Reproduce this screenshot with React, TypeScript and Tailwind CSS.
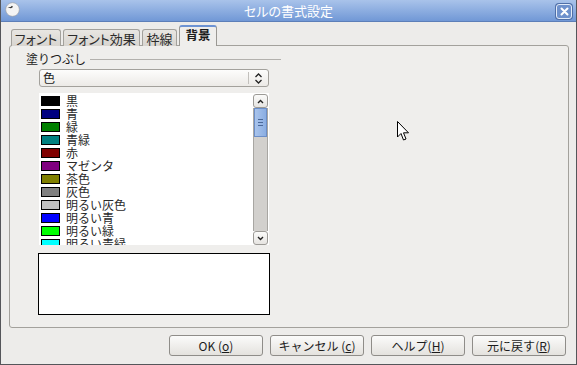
import React from 'react';

const FONT = "font-['DejaVu_Sans','Noto_Sans_CJK_JP',sans-serif]";
const JP = "font-['Noto_Sans_CJK_JP','DejaVu_Sans',sans-serif]";

const COLORS: { name: string; hex: string }[] = [
  { name: '黒', hex: '#000000' },
  { name: '青', hex: '#000080' },
  { name: '緑', hex: '#008000' },
  { name: '青緑', hex: '#008080' },
  { name: '赤', hex: '#800000' },
  { name: 'マゼンタ', hex: '#800080' },
  { name: '茶色', hex: '#808000' },
  { name: '灰色', hex: '#808080' },
  { name: '明るい灰色', hex: '#c0c0c0' },
  { name: '明るい青', hex: '#0000ff' },
  { name: '明るい緑', hex: '#00ff00' },
  { name: '明るい青緑', hex: '#00ffff' },
];

const TABS: { label: string; w: string }[] = [
  { label: 'フォント', w: 'w-[50px]' },
  { label: 'フォント効果', w: 'w-[77px]' },
  { label: '枠線', w: 'w-[35px]' },
  { label: '背景', w: 'w-[38px]' },
];

function TitleBar() {
  return (
    <div className="relative flex h-[22px] items-center justify-center border-b border-[#5d7fb8] bg-gradient-to-b from-[#a9c3ea] to-[#7198d6]">
      <svg className="absolute left-[4px] top-[2px]" width="15" height="15" viewBox="0 0 15 15">
        <circle cx="7.5" cy="7.5" r="6.8" fill="#f4f4f4" stroke="#a0a0a0" strokeWidth="0.6" />
        <path d="M2.5 5.5 L5.5 5 L7 3.8 L8 5 L6 6.2 Z" fill="#333" />
      </svg>
      <span className={`${JP} text-[13px] leading-none text-white [font-feature-settings:'palt']`}>セルの書式設定</span>
      <div className="absolute right-[4px] top-[4px] flex h-[15px] w-[16px] items-center justify-center rounded-[3px] border border-[#e2ebf8] bg-[#6e91cc] shadow-[0_0_0_1px_#4f6fa8]">
        <svg width="9" height="9" viewBox="0 0 9 9">
          <path d="M1.5 1.5 L7.5 7.5 M7.5 1.5 L1.5 7.5" stroke="#fff" strokeWidth="2" strokeLinecap="round" />
        </svg>
      </div>
    </div>
  );
}

function Tabs() {
  return (
    <div className="relative z-10 flex h-[20px] items-end pl-[10px]">
      {TABS.map((t, i) =>
        i === 3 ? (
          <div
            key={t.label}
            className={`${JP} ${t.w} flex h-[21px] items-center justify-center rounded-t-[3px] border-x border-t-2 border-x-[#9a9893] border-t-[#6d93d3] bg-[#efeeec] pb-[2px] text-[12.5px] font-bold leading-none text-[#1c1c1c]`}
          >
            {t.label}
          </div>
        ) : (
          <div
            key={t.label}
            className={`${JP} ${t.w} mr-[2px] flex h-[17px] items-center justify-center rounded-t-[3px] border border-b-0 border-[#a3a19c] bg-gradient-to-b from-[#e8e6e2] to-[#d8d5d0] text-[13px] leading-none text-[#2b2b2b] [font-feature-settings:'palt']`}
          >
            {t.label}
          </div>
        )
      )}
    </div>
  );
}

function Scrollbar() {
  return (
    <div className="flex w-[15px] flex-col">
      <div className="flex h-[14px] items-center justify-center rounded-[3px] border border-[#9c9a96] bg-gradient-to-b from-[#fbfbfa] to-[#e6e4e1]">
        <svg width="7" height="5" viewBox="0 0 7 5">
          <path d="M1 4 L3.5 1.5 L6 4" stroke="#222" strokeWidth="1.4" fill="none" />
        </svg>
      </div>
      <div className="flex flex-1 flex-col border-x border-[#a8a6a2] bg-[#d2d0cd]">
        <div className="flex h-[29px] flex-col items-center justify-center gap-[2px] border border-[#6b8ec8] bg-gradient-to-r from-[#a9c4ec] to-[#8aade2]">
          <div className="h-px w-[5px] bg-[#4a6899]" />
          <div className="h-px w-[5px] bg-[#4a6899]" />
          <div className="h-px w-[5px] bg-[#4a6899]" />
        </div>
      </div>
      <div className="flex h-[14px] items-center justify-center rounded-[3px] border border-[#9c9a96] bg-gradient-to-b from-[#fbfbfa] to-[#e6e4e1]">
        <svg width="7" height="5" viewBox="0 0 7 5">
          <path d="M1 1 L3.5 3.5 L6 1" stroke="#222" strokeWidth="1.4" fill="none" />
        </svg>
      </div>
    </div>
  );
}

function Panel() {
  return (
    <div className="-mt-px ml-[8px] h-[283px] w-[560px] rounded-[3px] border border-[#a3a19c] bg-[#efeeec] pl-[16px] pt-[6px]">
      <div className="flex items-center">
        <span className={`${JP} text-[12px] leading-[14px] text-[#1c1c1c]`}>塗りつぶし</span>
        <div className="ml-[4px] mt-[1px] h-px w-[191px] bg-[#b3b1ad]" />
      </div>
      <div className="ml-[13px] mt-[3px] w-[230px]">
        <div className="flex h-[18px] items-center rounded-[3px] border border-[#a3a19c] bg-gradient-to-b from-[#fdfdfc] to-[#eceae7]">
          <span className={`${JP} flex-1 pl-[3px] text-[12px] leading-none text-[#1c1c1c]`}>色</span>
          <div className="h-[12px] w-px bg-[#c2c0bc]" />
          <svg className="mx-[5px]" width="9" height="13" viewBox="0 0 9 13">
            <path d="M1.5 5 L4.5 2 L7.5 5 M1.5 8 L4.5 11 L7.5 8" stroke="#222" strokeWidth="1.3" fill="none" />
          </svg>
        </div>
        <div className="mt-[6px] flex h-[152px] bg-white pl-[2px] pr-[1px] pt-px">
          <div className="flex-1 overflow-hidden">
            {COLORS.map((c) => (
              <div key={c.name} className="flex h-[13px] items-center">
                <div className="h-[10px] w-[19px] border border-black" style={{ backgroundColor: c.hex }} />
                <span className={`${JP} ml-[6px] text-[12px] leading-[13px] text-[#2a2a2a]`}>{c.name}</span>
              </div>
            ))}
          </div>
          <Scrollbar />
        </div>
      </div>
      <div className="ml-[12px] mt-[8px] h-[62px] w-[232px] border border-black bg-white" />
    </div>
  );
}

function Button({ label, keyChar, space }: { label: string; keyChar: string; space?: boolean }) {
  return (
    <button
      className={`${FONT} flex h-[21px] w-[94px] items-center justify-center rounded-[3px] border border-[#8f8d89] bg-gradient-to-b from-[#fbfbfa] to-[#e4e2de] text-[12px] leading-none text-[#1c1c1c]`}
    >
      <span className={JP}>
        {label}
        {space ? ' ' : ''}(<span className="underline">{keyChar}</span>)
      </span>
    </button>
  );
}

export default function App() {
  return (
    <div className={`${FONT} relative h-[365px] w-[577px] overflow-hidden border-x border-b border-[#55565a] bg-[#edecea]`}>
      <TitleBar />
      <div className="pt-[4px]">
        <Tabs />
        <Panel />
        <div className="mt-[7px] flex justify-end gap-[7px] pr-[10px]">
          <Button label="OK" keyChar="o" space />
          <Button label="キャンセル" keyChar="c" space />
          <Button label="ヘルプ" keyChar="H" />
          <Button label="元に戻す" keyChar="R" />
        </div>
      </div>
      <svg className="absolute left-[396px] top-[121px]" width="14" height="21" viewBox="0 0 14 21">
        <path d="M0.5 0.5 L0.5 16 L4 12.5 L6.5 19 L9 18 L6.5 11.8 L11.5 11.8 Z" fill="#fff" stroke="#000" strokeWidth="1" strokeLinejoin="round" />
      </svg>
    </div>
  );
}
